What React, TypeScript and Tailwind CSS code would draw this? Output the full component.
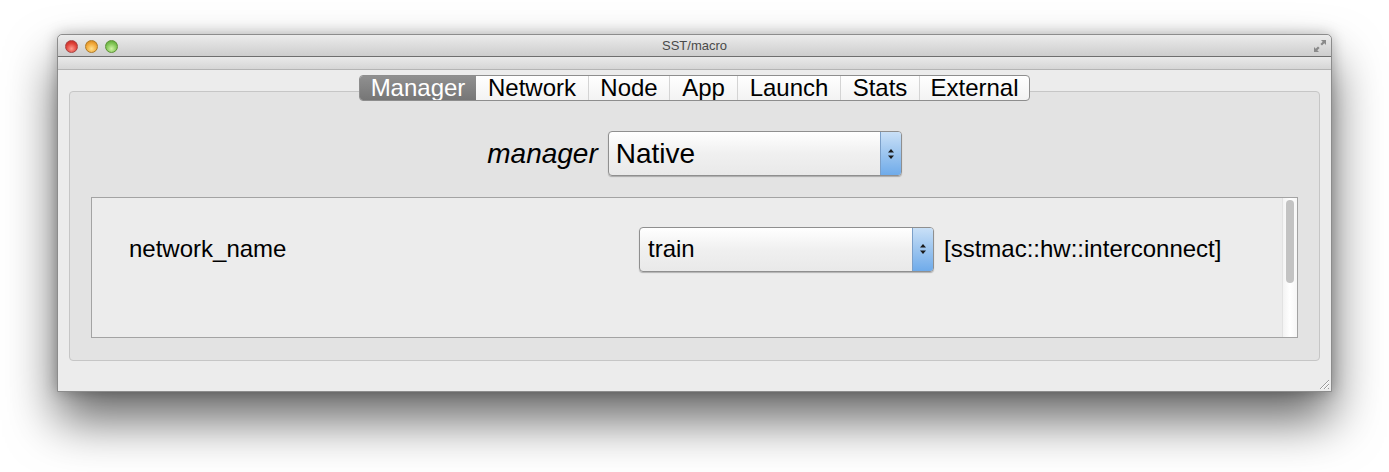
const tabs: [string, string][] = [
  ['Manager', 'w-[116px]'],
  ['Network', 'w-[112px]'],
  ['Node', 'w-[81px]'],
  ['App', 'w-[68px]'],
  ['Launch', 'w-[103px]'],
  ['Stats', 'w-[79px]'],
  ['External', 'w-[110px]'],
]

function Arrows() {
  return (
    <svg width="8" height="12" viewBox="0 0 8 12">
      <path d="M4 1 L7 4.5 L1 4.5 Z" fill="#1a1a1a" />
      <path d="M4 11 L7 7.5 L1 7.5 Z" fill="#1a1a1a" />
    </svg>
  )
}

function Select({ value, width, text }: { value: string; width: string; text: string }) {
  return (
    <div
      className={`${width} h-[45px] flex rounded-[4px] border border-[#8f8f8f] bg-gradient-to-b from-[#ffffff] via-[#f0f0f0] to-[#e9e9e9] shadow-[0_1px_1px_rgba(0,0,0,0.25)] overflow-hidden`}
    >
      <div className={`flex-1 flex items-center pl-[7px] ${text} text-black leading-none`}>
        {value}
      </div>
      <div className="w-[21px] flex items-center justify-center border-l border-[#7b9fc8] bg-gradient-to-b from-[#c9e0f7] via-[#9cc5ef] to-[#6fabea]">
        <Arrows />
      </div>
    </div>
  )
}

export default function App() {
  return (
    <div
      className="w-[1389px] h-[472px] bg-white pl-[57px] pt-[34px] overflow-hidden"
      style={{ fontFamily: '"Liberation Sans", Arial, sans-serif' }}
    >
      <div className="w-[1275px] h-[358px] flex flex-col rounded-t-[5px] border border-[#8c8c8c] bg-[#ececec] shadow-[0_28px_50px_rgba(0,0,0,0.6),0_0_14px_rgba(0,0,0,0.25)]">
        {/* Title bar */}
        <div className="relative h-[22px] shrink-0 flex items-center justify-center rounded-t-[5px] bg-gradient-to-b from-[#ececec] to-[#cdcdcd] border-b border-[#6e6e6e]">
          <div className="absolute left-[7px] top-[5px] flex gap-[7px]">
            <span className="w-[13px] h-[13px] rounded-full border border-[#a84444] bg-[radial-gradient(circle_at_50%_70%,#ff9a8f,#e0443b_55%,#b81f1a)]" />
            <span className="w-[13px] h-[13px] rounded-full border border-[#b07b26] bg-[radial-gradient(circle_at_50%_70%,#ffe08a,#f2a93b_55%,#c97a12)]" />
            <span className="w-[13px] h-[13px] rounded-full border border-[#5e9236] bg-[radial-gradient(circle_at_50%_70%,#cff3a4,#82c657_55%,#4f9a2b)]" />
          </div>
          <span className="text-[13px] text-[#4a4a4a]">SST/macro</span>
          <svg className="absolute right-[4px] top-[4px]" width="14" height="14" viewBox="0 0 14 14">
            <path d="M8 1 H13 V6 L11.3 4.3 L9 6.6 L7.4 5 L9.7 2.7 Z" fill="#8a8a8a" />
            <path d="M1 8 V13 H6 L4.3 11.3 L6.6 9 L5 7.4 L2.7 9.7 Z" fill="#8a8a8a" />
          </svg>
        </div>
        {/* Toolbar strip */}
        <div className="h-[13px] shrink-0 bg-gradient-to-b from-[#e9e9e9] to-[#d6d6d6] border-b border-[#b4b4b4]" />

        {/* Body */}
        <div className="relative flex-1 px-[11px] pt-[5px]">
          <div className="relative z-10 flex justify-center">
            <div className="flex h-[26px] rounded-[4px] border border-[#8e8e8e] bg-gradient-to-b from-[#ffffff] to-[#f3f3f3] overflow-hidden text-[24px] leading-none">
              {tabs.map(([t, w], i) => (
                <div
                  key={t}
                  className={`${w} flex items-center justify-center ${
                    i === 0
                      ? 'bg-gradient-to-b from-[#909090] to-[#767676] text-white'
                      : 'text-black'
                  } ${i > 1 ? 'border-l border-[#d4d4d4]' : ''}`}
                >
                  {t}
                </div>
              ))}
            </div>
          </div>

          <div className="-mt-[10px] h-[270px] rounded-[4px] border border-[#c6c6c6] bg-[#e3e3e3] flex flex-col items-center pt-[39px]">
            <div className="flex items-center gap-[10px]">
              <span className="text-[28px] italic text-black leading-none">manager</span>
              <Select value="Native" width="w-[294px]" text="text-[28px]" />
            </div>

            <div className="mt-[21px] w-[1207px] h-[141px] border border-[#a3a3a3] bg-[#ececec] flex">
              <div className="flex-1 flex items-start pt-[28px] pl-[37px]">
                <div className="flex items-center h-[46px]">
                  <span className="w-[510px] text-[24px] text-black leading-none">network_name</span>
                  <div className="flex items-center gap-[10px] text-[24px] leading-none">
                    <Select value="train" width="w-[295px]" text="text-[24px] pl-[8px]" />
                    <span className="text-black">[sstmac::hw::interconnect]</span>
                  </div>
                </div>
              </div>
              <div className="w-[15px] border-l border-[#e2e2e2] bg-gradient-to-r from-[#f3f3f3] via-[#ffffff] to-[#f6f6f6] pt-[2px] flex justify-center">
                <div className="w-[8px] h-[83px] rounded-full bg-[#c3c3c3]" />
              </div>
            </div>
          </div>

          <svg className="absolute right-[1px] bottom-[1px]" width="12" height="12" viewBox="0 0 12 12">
            <path d="M11 2 L2 11 M11 6 L6 11 M11 10 L10 11" stroke="#9a9a9a" strokeWidth="1" />
            <path d="M11 3 L3 11 M11 7 L7 11" stroke="#ffffff" strokeWidth="1" />
          </svg>
        </div>
      </div>
    </div>
  )
}
